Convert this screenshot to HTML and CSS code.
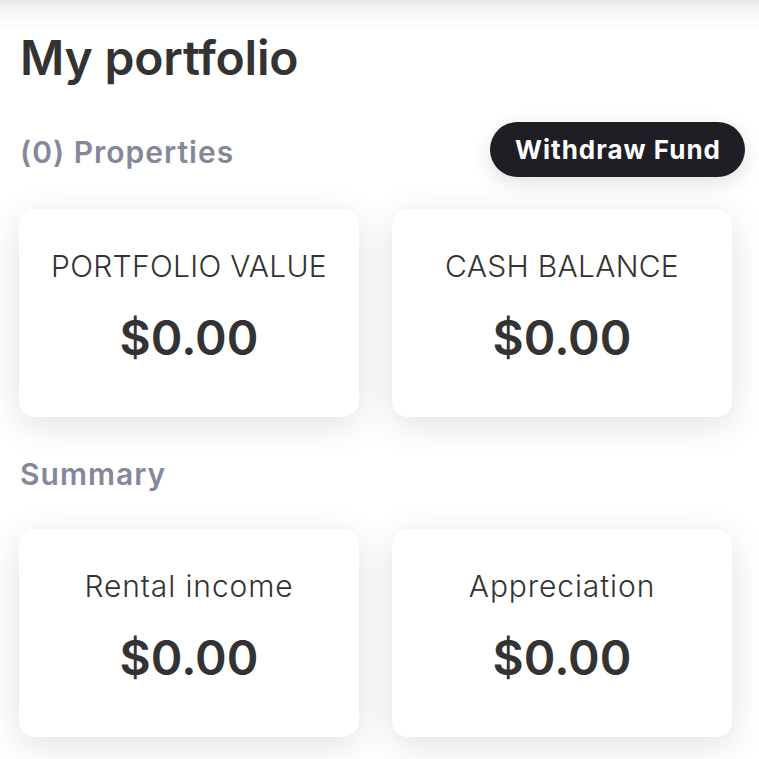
FILE: index.html
```html
<!DOCTYPE html>
<html lang="en">
<head>
<meta charset="utf-8">
<title>My portfolio</title>
<link rel="stylesheet" href="styles.css">
</head>
<body>
<main class="page">
  <h1 class="title">My portfolio</h1>
  <div class="section-head">
    <h2 class="section-title properties">(0) Properties</h2>
    <button class="btn-withdraw">Withdraw Fund</button>
  </div>
  <div class="cards">
    <div class="card">
      <div class="card-label caps">PORTFOLIO VALUE</div>
      <div class="card-value">$0.00</div>
    </div>
    <div class="card">
      <div class="card-label caps">CASH BALANCE</div>
      <div class="card-value">$0.00</div>
    </div>
  </div>
  <h2 class="section-title summary">Summary</h2>
  <div class="cards cards-summary">
    <div class="card">
      <div class="card-label">Rental income</div>
      <div class="card-value">$0.00</div>
    </div>
    <div class="card">
      <div class="card-label">Appreciation</div>
      <div class="card-value">$0.00</div>
    </div>
  </div>
</main>
</body>
</html>
```

FILE: styles.css
```css
html, body {
  margin: 0;
  padding: 0;
}
body {
  background: #ffffff linear-gradient(#e8e8e8 0px, #f6f6f6 12px, #ffffff 30px) no-repeat;
  background-size: 100% 30px;
  font-family: "Inter", "DejaVu Sans", sans-serif;
  color: #333333;
  width: 759px;
  height: 759px;
  overflow: hidden;
}
.page {
  padding: 28px 14px 0 19px;
}
.title {
  margin: 0 0 0 1px;
  font-size: 48px;
  font-weight: 600;
  line-height: 60px;
  color: #333333;
  letter-spacing: -0.2px;
}
.section-head {
  display: flex;
  justify-content: space-between;
  align-items: center;
  margin-top: 34px;
}
.section-title {
  margin: 0 0 0 1px;
  font-size: 30px;
  font-weight: 600;
  color: #85879a;
  line-height: 40px;
  letter-spacing: 1px;
}
.properties {
  padding-top: 5px;
}
.btn-withdraw {
  height: 55px;
  padding: 0 24px 0 25px;
  border: none;
  border-radius: 28px;
  background: #1e1e24;
  color: #ffffff;
  font-family: inherit;
  font-size: 26px;
  font-weight: 700;
  letter-spacing: 1px;
  box-shadow: 0 6px 20px rgba(0,0,0,0.12);
}
.cards {
  display: flex;
  gap: 33px;
  margin-top: 32px;
}
.cards-summary {
  margin-top: 35px;
}
.card {
  width: 340px;
  height: 208px;
  box-sizing: border-box;
  padding-bottom: 12px;
  border-radius: 16px;
  background: #ffffff;
  box-shadow: 0 8px 36px rgba(0,0,0,0.12);
  display: flex;
  flex-direction: column;
  align-items: center;
  justify-content: center;
  gap: 26px;
}
.card-label {
  font-size: 30px;
  font-weight: 300;
  color: #333333;
  line-height: 36px;
  letter-spacing: 0.9px;
}
.card-label.caps {
  letter-spacing: 0.3px;
}
.card-value {
  font-size: 48px;
  font-weight: 600;
  color: #333333;
  line-height: 56px;
}
.summary {
  margin-top: 37px;
}
```
